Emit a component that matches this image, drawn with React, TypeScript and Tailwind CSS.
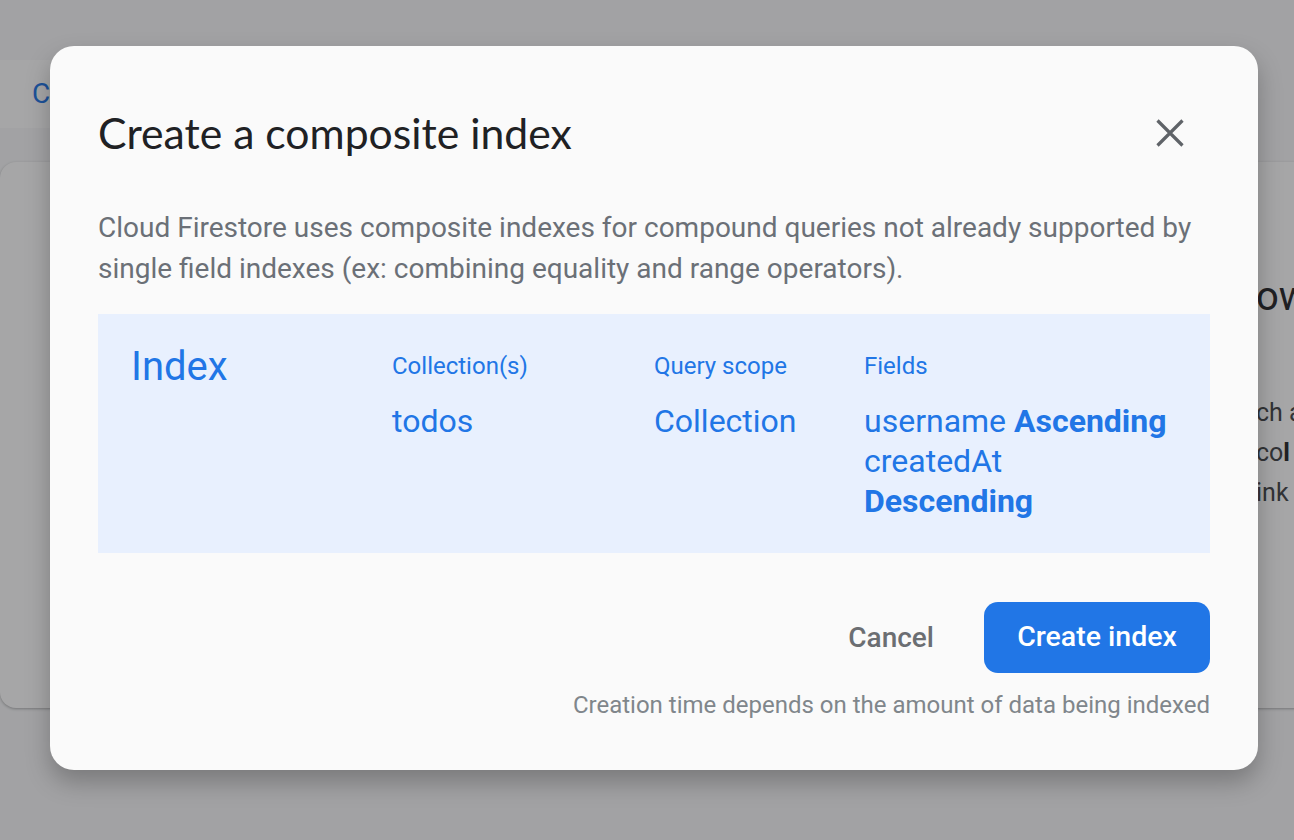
import React from "react";

export default function App() {
  return (
    <div
      className="relative h-[840px] w-[1294px] overflow-hidden bg-[#f8f9fa]"
      style={{ fontFamily: "Roboto, 'Liberation Sans', sans-serif" }}
    >
      {/* page behind */}
      <div className="flex flex-col pt-[60px]">
        <div className="ml-[-20px] flex h-[68px] w-[120px] items-center rounded-[14px] bg-[#ffffff] pl-[52px] text-[28px] text-[#1a73e8]">
          Cr
        </div>
        <div className="mt-[34px] flex h-[546px] w-[1320px] justify-end rounded-[16px] bg-white shadow-[0_1px_3px_rgba(0,0,0,0.3)]">
          <div className="flex w-[64px] flex-col text-[#202124]">
            <div className="mt-[112px] text-[40px] leading-[46px]">ow</div>
            <div className="mt-[73px] text-[25px] leading-[40px] text-[#3c4043]">ch a</div>
            <div className="text-[25px] leading-[40px] text-[#3c4043]">
              co<span className="font-bold text-[#202124]">l</span>
            </div>
            <div className="text-[25px] leading-[40px] text-[#3c4043]">ink</div>
          </div>
        </div>
      </div>

      {/* scrim */}
      <div className="absolute inset-0 bg-[rgba(32,33,36,0.4)]" />

      {/* dialog */}
      <div className="absolute left-[50px] top-[46px] flex h-[724px] w-[1208px] flex-col rounded-[24px] bg-[#fafafa] px-[48px] shadow-[0_12px_24px_rgba(0,0,0,0.25)]">
        <div className="mt-[61px] flex items-center justify-between">
          <h1
            className="text-[42.7px] leading-[52px] text-[#202124]"
            style={{ fontFamily: "Lato, 'Open Sans', sans-serif" }}
          >
            Create a composite index
          </h1>
          <button className="mr-[20px] flex h-[40px] w-[40px] items-center justify-center">
            <svg width="28" height="28" viewBox="0 0 28 28">
              <path d="M1.5 1.5 L26.5 26.5 M26.5 1.5 L1.5 26.5" stroke="#5f6368" strokeWidth="3.2" />
            </svg>
          </button>
        </div>

        <p className="mt-[48px] text-[28px] leading-[41px] text-[#6b7077]">
          Cloud Firestore uses composite indexes for compound queries not already supported by
          single field indexes (ex: combining equality and range operators).
        </p>

        <div className="mt-[25px] grid h-[239px] grid-cols-[261px_262px_210px_1fr] bg-[#e8f0fe] pl-[33px] pt-[27px] text-[#2176e6]">
          <div className="text-[40px] leading-[52px]">Index</div>
          <div className="flex flex-col pt-[5px]">
            <div className="text-[24px] leading-[40px]">Collection(s)</div>
            <div className="mt-[15px] text-[32px] leading-[40px]">todos</div>
          </div>
          <div className="flex flex-col pt-[5px]">
            <div className="text-[24px] leading-[40px]">Query scope</div>
            <div className="mt-[15px] text-[32px] leading-[40px]">Collection</div>
          </div>
          <div className="flex flex-col pt-[5px]">
            <div className="text-[24px] leading-[40px]">Fields</div>
            <div className="mt-[15px] text-[32px] leading-[40px]">
              username <span className="font-bold">Ascending</span>
              <br />
              createdAt
              <br />
              <span className="font-bold">Descending</span>
            </div>
          </div>
        </div>

        <div className="mt-[49px] flex items-center justify-end">
          <button className="mr-[50px] text-[28px] font-medium text-[#6b6e72]">Cancel</button>
          <button className="flex h-[71px] w-[226px] items-center justify-center rounded-[14px] bg-[#2176e6] text-[28.5px] font-medium text-white">
            Create index
          </button>
        </div>

        <div className="mt-[18px] text-right text-[24px] leading-[28px] text-[#80868b]">
          Creation time depends on the amount of data being indexed
        </div>
      </div>
    </div>
  );
}
